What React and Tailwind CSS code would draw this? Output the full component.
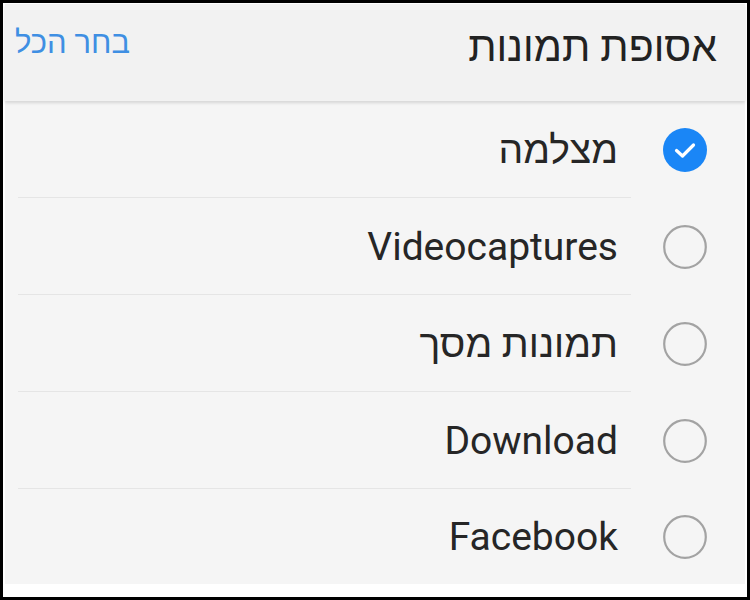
import React from "react";

const items = [
  { label: "מצלמה", checked: true },
  { label: "Videocaptures", checked: false },
  { label: "תמונות מסך", checked: false },
  { label: "Download", checked: false },
  { label: "Facebook", checked: false },
];

function Check({ checked }) {
  if (checked) {
    return (
      <svg width="44" height="44" viewBox="0 0 44 44">
        <circle cx="22" cy="22" r="22" fill="#1a86f6" />
        <path d="M13.5 22.5 L19.5 28 L30.5 17" fill="none" stroke="#fff" strokeWidth="3.2" strokeLinecap="round" strokeLinejoin="round" />
      </svg>
    );
  }
  return (
    <svg width="44" height="44" viewBox="0 0 44 44">
      <circle cx="22" cy="22" r="20.8" fill="none" stroke="#a3a3a3" strokeWidth="2.2" />
    </svg>
  );
}

export default function App() {
  const font = { fontFamily: 'Roboto, "Liberation Sans", "DejaVu Sans", sans-serif' };
  return (
    <div className="w-[750px] h-[600px] bg-black p-[3px] pb-[3px]" style={font}>
      <div className="w-full h-full bg-white px-[2px] pt-[1px] flex flex-col">
        <div className="relative z-10 h-[97px] bg-[#f2f2f2] shadow-[0_2px_3px_rgba(0,0,0,0.13)] flex items-start justify-between pt-[18px] pl-[10px] pr-[28px]">
          <span className="text-[31px] text-[#3f8fe3] leading-[40px] pt-[1px]" dir="rtl">בחר הכל</span>
          <span className="text-[41px] text-[#222] leading-[50px]" dir="rtl">אסופת תמונות</span>
        </div>
        <div className="bg-[#f5f5f5] flex flex-col" dir="rtl">
          {items.map((it, i) => (
            <div key={i} className={`flex items-stretch ${i === items.length - 1 ? "h-[95px]" : "h-[97px]"}`}>
              <div className="w-[114px] pr-[38px] flex items-center">
                <Check checked={it.checked} />
              </div>
              <div className={`flex-1 ml-[13px] pr-[13px] flex items-center ${i === items.length - 1 ? "" : "border-b border-[#e5e5e5]"}`}>
                <span className="text-[39px] text-[#262626] leading-none pt-[2px]">{it.label}</span>
              </div>
            </div>
          ))}
        </div>
      </div>
    </div>
  );
}
